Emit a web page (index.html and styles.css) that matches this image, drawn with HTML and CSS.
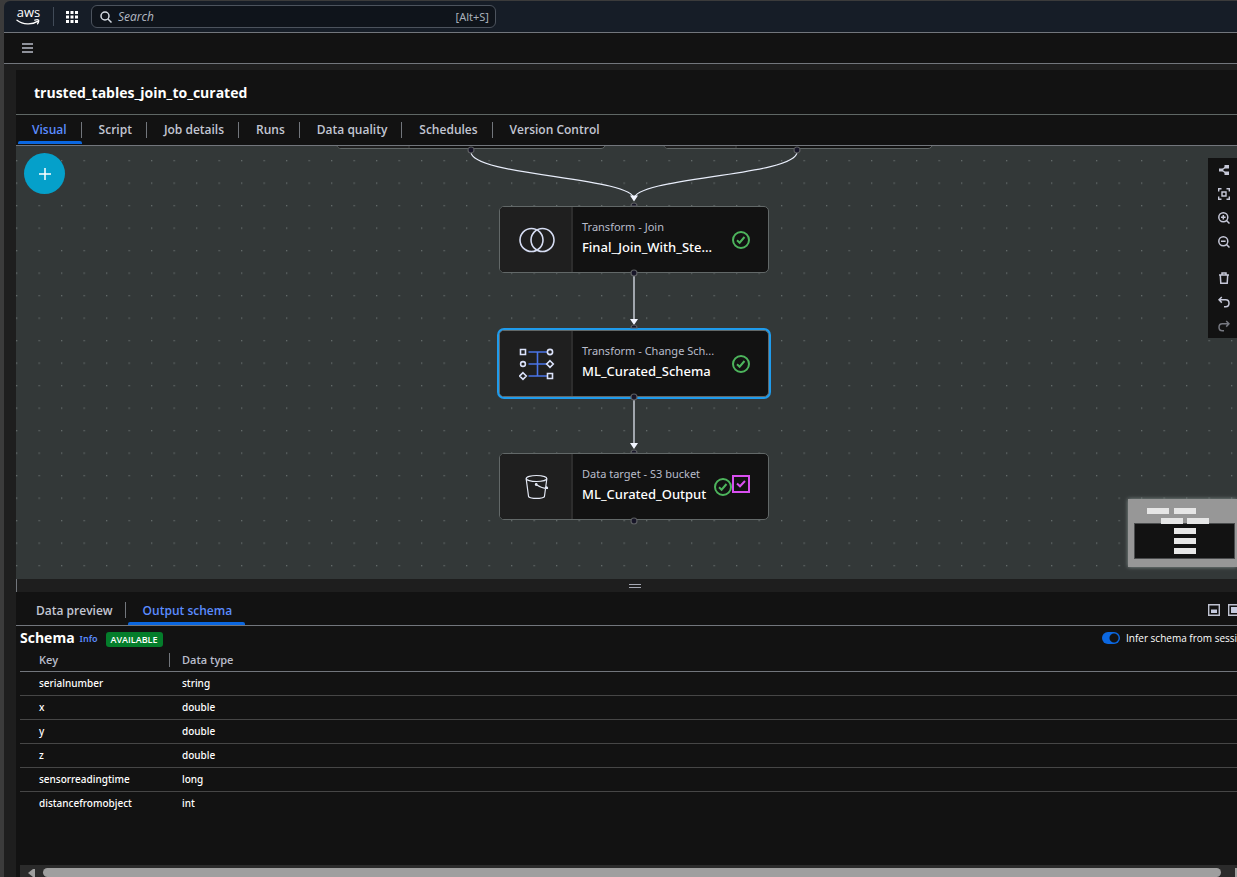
FILE: index.html
```html
<!DOCTYPE html>
<html lang="en">
<head>
<meta charset="utf-8">
<title>trusted_tables_join_to_curated</title>
<link rel="stylesheet" href="styles.css">
</head>
<body>
<div class="app">
  <header class="topnav">
    <a class="logo" href="#" aria-label="aws">
      <span class="logo-text">aws</span>
      <svg class="logo-smile" width="24" height="7" viewBox="0 0 24 7"><path d="M1 1.2C7 5.8 16 6 21.5 2.4M18.8 1.2c1.5-.5 3.3-.5 3.8 0 .3.8-.3 2.5-1.1 3.6" fill="none" stroke="#fff" stroke-width="1.3" stroke-linecap="round"/></svg>
    </a>
    <span class="nav-rule"></span>
    <button class="icon-btn apps" aria-label="Services">
      <svg width="12" height="12" viewBox="0 0 12 12" fill="#fff"><path d="M0 0h3v3H0zM4.500 0h3v3h-3zM9 0h3v3H9zM0 4.500h3v3H0zM4.500 4.500h3v3h-3zM9 4.500h3v3H9zM0 9h3v3H0zM4.500 9h3v3h-3zM9 9h3v3H9z"/></svg>
    </button>
    <div class="search">
      <svg width="12" height="12" viewBox="0 0 12 12" fill="none" stroke="#d5dbe3" stroke-width="1.5"><circle cx="5" cy="5" r="4"/><path d="M8 8l3.5 3.5"/></svg>
      <input type="text" placeholder="Search" aria-label="Search">
      <span class="shortcut">[Alt+S]</span>
    </div>
  </header>
  <div class="subnav">
    <button class="icon-btn" aria-label="Open menu">
      <svg width="11" height="10" viewBox="0 0 11 10" stroke="#b8bcc8" stroke-width="1.6"><path d="M0 1h11M0 5h11M0 9h11"/></svg>
    </button>
  </div>
  <main class="workspace">
    <h1 class="title">trusted_tables_join_to_curated</h1>
    <nav class="tabs">
      <button class="tab active">Visual</button>
      <button class="tab">Script</button>
      <button class="tab">Job details</button>
      <button class="tab">Runs</button>
      <button class="tab">Data quality</button>
      <button class="tab">Schedules</button>
      <button class="tab">Version Control</button>
    </nav>
    <section class="canvas">
      <svg class="grid" width="100%" height="100%">
        <defs><pattern id="dots" width="22.5" height="22.5" y="3.2" patternUnits="userSpaceOnUse"><rect x="0" y="11" width="1.3" height="1" fill="#747b7a"/></pattern></defs>
        <rect width="100%" height="100%" fill="url(#dots)"/>
      </svg>
      <div class="node parent-left"><span class="node-icon"></span></div>
      <div class="node parent-right"><span class="node-icon"></span></div>
      <article class="node join">
        <span class="node-icon">
          <svg width="36" height="26" viewBox="0 0 36 26" fill="none" stroke="#d5dcf2" stroke-width="1.6"><circle cx="12.500" cy="13" r="11.500"/><circle cx="23.500" cy="13" r="11.500"/></svg>
        </span>
        <span class="node-text"><span class="kind">Transform - Join</span><span class="name">Final_Join_With_Ste...</span></span>
        <svg class="ok" width="18" height="18" viewBox="0 0 18 18" fill="none" stroke="#4db45c" stroke-width="2"><circle cx="9" cy="9" r="8"/><path d="M5 9.300l2.600 2.400L12.500 6"/></svg>
      </article>
      <article class="node schema selected">
        <span class="node-icon">
          <svg width="36" height="34" viewBox="0 0 36 34" fill="none" stroke-width="1.600"><path d="M9.500 5H28M9.500 17H28M9.500 29H28M18.500 5v24" stroke="#4a74e8"/><g stroke="#dbe2fa"><path d="M1.500 2.500h5v5h-5zM28.500 26.500h5v5h-5zM4 25.700L7.300 29 4 32.300.7 29zM31 13.700l3.300 3.300-3.300 3.300-3.300-3.300z"/><circle cx="4" cy="17" r="2.400"/><circle cx="31" cy="5" r="2.600"/></g></svg>
        </span>
        <span class="node-text"><span class="kind">Transform - Change Sch...</span><span class="name">ML_Curated_Schema</span></span>
        <svg class="ok" width="18" height="18" viewBox="0 0 18 18" fill="none" stroke="#4db45c" stroke-width="2"><circle cx="9" cy="9" r="8"/><path d="M5 9.300l2.600 2.400L12.500 6"/></svg>
      </article>
      <article class="node target">
        <span class="node-icon">
          <svg width="24" height="26" viewBox="0 0 24 26" fill="none" stroke="#e4e9f5" stroke-width="1.200" stroke-linecap="round"><ellipse cx="11.500" cy="4.500" rx="10.300" ry="3"/><path d="M1.200 5l2.400 17.800c2.500 2.200 13.300 2.200 15.800 0L21.800 5M11.500 10.800c3.500 2.200 8 4 11 3.600.3-.9-.7-1.500-1.800-1.800"/><circle cx="11.200" cy="10.500" r=".8"/></svg>
        </span>
        <span class="node-text"><span class="kind">Data target - S3 bucket</span><span class="name">ML_Curated_Output</span></span>
        <svg class="ok" width="18" height="18" viewBox="0 0 18 18" fill="none" stroke="#4db45c" stroke-width="2"><circle cx="9" cy="9" r="8"/><path d="M5 9.300l2.600 2.400L12.500 6"/></svg>
        <svg class="preview" width="18" height="18" viewBox="0 0 18 18" fill="none" stroke="#d94ff0" stroke-width="2"><path d="M1 1h16v16H1zM5 8.500l3 2.800L13 6"/></svg>
      </article>
      <svg class="edges" width="640" height="433" viewBox="0 0 640 433" fill="none">
        <g stroke="#e9eefb" stroke-width="1.200">
          <path d="M135 6C135 30 298 31 298 53"/>
          <path d="M461 6C461 30 298 31 298 53"/>
          <path d="M298 129v48M298 253v48"/>
        </g>
        <path d="M294 49.500h8l-4 6zM294 173h8l-4 6zM294 297h8l-4 6z" fill="#f2f5ff"/>
        <g fill="#171528" stroke="#5b5d60" stroke-width="1.200">
          <circle cx="135" cy="4" r="3"/><circle cx="461" cy="4" r="3"/>
          <path d="M295 60a3 3 0 0 1 6 0zM295 182a3 3 0 0 1 6 0zM295 307a3 3 0 0 1 6 0z"/>
          <circle cx="298" cy="127" r="3"/><circle cx="298" cy="251" r="3"/><circle cx="298" cy="375" r="3"/>
        </g>
      </svg>
      <button class="add" aria-label="Add node"><svg width="12" height="12" viewBox="0 0 12 12" stroke="#fff" stroke-width="1.500"><path d="M6 0v12M0 6h12"/></svg></button>
      <div class="tools">
        <button class="icon-btn" aria-label="Arrange"><svg width="12" height="12" viewBox="0 0 12 12" fill="#c6c8d8"><path d="M6.500 1H11v3.500H6.500zM6.500 7.500H11V11H6.500zM1 4.500h4v3H1z"/><path d="M4 6l3.500-3M4 6l3.500 3" stroke="#c6c8d8" stroke-width="1.200"/></svg></button>
        <button class="icon-btn" aria-label="Fit to screen"><svg width="12" height="12" viewBox="0 0 12 12" fill="none" stroke="#c6c8d8" stroke-width="1.400"><path d="M.7 3.500V.7h2.800M8.500.7h2.800v2.800M11.300 8.500v2.800H8.500M3.500 11.300H.7V8.500M4 4h4v4H4z"/></svg></button>
        <button class="icon-btn" aria-label="Zoom in"><svg width="12" height="12" viewBox="0 0 12 12" fill="none" stroke="#c6c8d8" stroke-width="1.500"><circle cx="5.300" cy="5.300" r="4.500"/><path d="M8.500 8.500l3 3M3 5.300h4.600M5.300 3v4.600"/></svg></button>
        <button class="icon-btn" aria-label="Zoom out"><svg width="12" height="12" viewBox="0 0 12 12" fill="none" stroke="#c6c8d8" stroke-width="1.500"><circle cx="5.300" cy="5.300" r="4.500"/><path d="M8.500 8.500l3 3M3 5.300h4.600"/></svg></button>
        <button class="icon-btn remove" aria-label="Delete"><svg width="12" height="12" viewBox="0 0 12 12" fill="none" stroke="#c6c8d8" stroke-width="1.500"><path d="M1 3h10M4 3V1h4v2M2.300 3l.5 8.200h6.400L9.700 3"/></svg></button>
        <button class="icon-btn" aria-label="Undo"><svg width="12" height="12" viewBox="0 0 12 12" fill="none" stroke="#c6c8d8" stroke-width="1.500"><path d="M3.800 1L1 3.800l2.800 2.800M1 3.800h6.700c4.400 0 4.400 7 0 7H6"/></svg></button>
        <button class="icon-btn" aria-label="Redo" disabled><svg width="12" height="12" viewBox="0 0 12 12" fill="none" stroke="#777981" stroke-width="1.500"><path d="M8.200 1L11 3.800 8.200 6.600M11 3.800H4.300c-4.400 0-4.400 7 0 7H6"/></svg></button>
      </div>
      <svg class="minimap" width="109" height="68" viewBox="0 0 109 68">
        <rect width="109" height="68" fill="#979797"/>
        <rect x="6.500" y="24.500" width="100" height="35" fill="#121212" stroke="#4a4c4d"/>
        <path fill="#e6e6e6" d="M19 9h22v6H19zM46 9h22v6H46zM33 19h22v6H33zM59 19h22v6H59zM46 29h22v6H46zM46 39h22v6H46zM46 49h22v6H46z"/>
      </svg>
    </section>
    <div class="splitter"><svg width="12" height="4" viewBox="0 0 12 4" stroke="#a5a8b3"><path d="M0 .5h12M0 3.500h12"/></svg></div>
    <section class="drawer">
      <nav class="tabs drawer-tabs">
        <button class="tab">Data preview</button>
        <button class="tab active">Output schema</button>
        <span class="layout-btns">
          <button class="icon-btn" aria-label="Small panel"><svg width="12" height="12" viewBox="0 0 12 12"><path d="M.7.700h10.600v10.600H.7z" fill="none" stroke="#bfc2d1" stroke-width="1.400"/><path d="M3 5.500h6V9H3z" fill="#c6cbe0"/></svg></button>
          <button class="icon-btn" aria-label="Full panel"><svg width="12" height="12" viewBox="0 0 12 12"><path d="M.7.700h10.600v10.600H.7z" fill="none" stroke="#bfc2d1" stroke-width="1.400"/><path d="M3 3h6v6H3z" fill="#c6cbe0"/></svg></button>
        </span>
      </nav>
      <div class="schema-head">
        <h2>Schema</h2>
        <a href="#">Info</a>
        <span class="badge">AVAILABLE</span>
        <label class="infer"><input type="checkbox" checked><span>Infer schema from sessi</span></label>
      </div>
      <table class="fields">
        <thead><tr><th scope="col"><span>Key</span></th><th scope="col">Data type</th></tr></thead>
        <tbody>
          <tr><td>serialnumber</td><td>string</td></tr>
          <tr><td>x</td><td>double</td></tr>
          <tr><td>y</td><td>double</td></tr>
          <tr><td>z</td><td>double</td></tr>
          <tr><td>sensorreadingtime</td><td>long</td></tr>
          <tr><td>distancefromobject</td><td>int</td></tr>
        </tbody>
      </table>
      <div class="scrollbar">
        <svg width="7" height="10" viewBox="0 0 7 10"><path d="M7 1v8H5L0 5l5-4z" fill="#9f9f9f"/></svg>
        <span class="thumb"></span>
        <span class="next"></span>
      </div>
    </section>
  </main>
</div>
</body>
</html>
```
FILE: styles.css
```css
* { box-sizing: border-box; }
body {
  margin: 0;
  height: 100vh;
  overflow: hidden;
  background: #3b3b3b;
  color: #fff;
  font: 12px/16px "Noto Sans", "Open Sans", sans-serif;
}
button, input { font: inherit; color: inherit; }
button { background: none; border: 0; padding: 0; }
svg { display: block; }
.app {
  height: 100%;
  padding: 1px 0 0 4px;
  display: flex;
  flex-direction: column;
}
.icon-btn { display: flex; flex: none; }

.topnav {
  display: flex;
  align-items: center;
  height: 32px;
  flex: none;
  padding-left: 12px;
  background: #161d27;
  border-bottom: 1px solid #72767c;
  border-top-left-radius: 6px;
}
.logo { width: 25px; color: #fff; text-decoration: none; }
.logo-text { display: block; text-align: center; font: 500 13px/11px "Open Sans", sans-serif; }
.logo-smile { margin-top: 1px; }
.nav-rule { width: 1px; height: 19px; margin: 0 12px; background: #414b58; }
.search {
  display: flex;
  align-items: center;
  gap: 6px;
  width: 405px;
  height: 23px;
  margin-left: 13px;
  padding: 0 6px 0 8px;
  background: #0f141b;
  border: 1px solid #4c535d;
  border-radius: 6px;
}
.search input {
  flex: 1;
  min-width: 0;
  padding: 0;
  border: 0;
  background: none;
  outline: 0;
}
.search input::placeholder { color: #b3b9c2; font-family: "Open Sans", sans-serif; font-style: italic; opacity: 1; }
.shortcut { color: #a9b0ba; font-size: 11px; }

.subnav {
  display: flex;
  align-items: center;
  height: 31px;
  flex: none;
  padding-left: 18px;
  background: #121212;
  border-bottom: 1px solid #72767c;
}

.workspace {
  flex: 1;
  min-height: 0;
  display: grid;
  grid-template-columns: minmax(0, 1fr);
  grid-template-rows: auto auto minmax(0, 433fr) 13px minmax(0, 285fr);
  padding: 6px 0 0 12px;
  background: #1e1e1e;
}
.title {
  margin: 0;
  padding: 13px 18px 11px;
  font: 700 14px/20px "Open Sans", sans-serif;
  background: #121212;
  border-bottom: 1px solid #5f6765;
}
.tabs {
  display: flex;
  align-items: stretch;
  height: 31px;
  padding-left: 2px;
  background: #121212;
  border-bottom: 1px solid #72767c;
  font-family: "Open Sans", sans-serif;
}
.tab {
  position: relative;
  padding: 0 15px 0 14px;
  color: #c2c6d2;
  font-weight: 600;
  white-space: nowrap;
}
.tab + .tab { padding-left: 17px; }
.tab:not(:last-of-type)::after {
  content: "";
  position: absolute;
  right: 0;
  top: 7px;
  height: 16px;
  border-right: 1px solid #72767c;
}
.tab.active { color: #5b8cff; }
.tab.active::before {
  content: "";
  position: absolute;
  left: 0;
  right: 0;
  bottom: 1px;
  height: 3px;
  background: #0b67e0;
  border-radius: 2px 2px 0 0;
}

.canvas { position: relative; overflow: hidden; background: #333838; }
.grid { position: absolute; inset: 0; }
.node {
  position: absolute;
  left: 483px;
  width: 270px;
  height: 67px;
  display: flex;
  align-items: center;
  padding-right: 18px;
  background: #121212;
  border: 1px solid #626868;
  border-radius: 5px;
  overflow: hidden;
}
.parent-left { left: 320px; top: -64px; }
.parent-right { left: 647px; top: -64px; }
.join { top: 60px; }
.schema { top: 184px; }
.target { top: 307px; }
.selected { box-shadow: 0 0 0 2px #1f9bec; }
.node-icon {
  width: 73px;
  height: 100%;
  flex: none;
  display: flex;
  align-items: center;
  justify-content: center;
  padding-left: 2px;
  background: #1f1f1f;
  border-right: 2px solid #2d2d2d;
}
.node-text { flex: 1; padding: 0 0 3px 9px; white-space: nowrap; min-width: 0; }
.kind { display: block; font-size: 11px; line-height: 18px; color: #b9bdcb; }
.name { display: block; font-size: 13px; line-height: 22px; font-weight: 500; }
.ok { flex: none; }
.preview { flex: none; margin-bottom: 6px; }
.edges { position: absolute; left: 320px; top: 0; }
.add {
  position: absolute;
  left: 8px;
  top: 7px;
  width: 41px;
  height: 41px;
  display: grid;
  place-items: center;
  border-radius: 50%;
  background: #05a0ca;
}
.tools {
  position: absolute;
  right: 0;
  top: 12px;
  width: 29px;
  display: flex;
  flex-direction: column;
  gap: 12px;
  padding: 6px 0 6px 10px;
  background: #121212;
}
.remove { margin-top: 12px; }
.minimap {
  position: absolute;
  right: 0;
  bottom: 12px;
  box-shadow: 0 0 4px #8a9594;
}

.splitter {
  display: grid;
  place-items: center;
  padding-left: 15px;
  border-left: 1px solid #72767c;
}
.drawer {
  display: flex;
  flex-direction: column;
  min-height: 0;
  background: #121212;
  font-size: 10px;
}
.drawer-tabs { height: 34px; flex: none; padding: 3px 0 0 4px; font-size: 12px; }
.drawer-tabs .tab { padding: 2px 13px 0 16px; }
.drawer-tabs .tab + .tab { margin-left: 2px; padding-left: 15px; }
.drawer-tabs .tab.active::before { bottom: 0; }
.layout-btns { display: flex; gap: 8px; margin-left: auto; width: 29px; overflow: hidden; align-items: center; }

.schema-head {
  display: flex;
  align-items: center;
  height: 23px;
  flex: none;
  padding-left: 4px;
}
h2 { margin: 0; font: 700 14px/20px "Open Sans", sans-serif; }
.schema-head a { margin: 3px 8px 0 5px; font-size: 9px; font-weight: 600; color: #5b8cff; text-decoration: none; }
.badge {
  margin-top: 3px;
  padding: 0 5px;
  font: 600 9px/15px "Open Sans", sans-serif;
  background: #047d2b;
  border-radius: 3px;
}
.infer {
  display: flex;
  align-items: center;
  gap: 6px;
  width: 135px;
  margin-left: auto;
  font-family: "Open Sans", sans-serif;
  white-space: nowrap;
}
.infer input {
  appearance: none;
  flex: none;
  margin: 0;
  width: 18px;
  height: 12px;
  border-radius: 6px;
  background: radial-gradient(circle at 12px 6px, #121212 4px, #0b67e0 5px);
}

.fields { width: calc(100% - 4px); margin-left: 4px; border-collapse: collapse; table-layout: fixed; }
.fields th, .fields td {
  height: 24px;
  padding: 0 0 0 12px;
  text-align: left;
  font-weight: 500;
  line-height: 16px;
  border-bottom: 1px solid #464646;
}
.fields th { height: 22px; color: #b9bdcb; font: 600 11px/16px "Open Sans", sans-serif; border-bottom-color: #72767c; }
.fields th:first-child { width: 150px; }
.fields th span { display: block; border-right: 1px solid #72767c; line-height: 14px; }
.fields th:first-child, .fields td:first-child { padding-left: 19px; }
.fields tbody tr:last-child td { border-bottom: 0; }

.scrollbar {
  display: flex;
  align-items: center;
  height: 12px;
  flex: none;
  margin: auto 0 0 4px;
  padding: 3px 0 0 8px;
  background: #2b2b2b;
  overflow: hidden;
}
.thumb { flex: 1; height: 9px; margin: 0 14px 0 8px; border-radius: 5px; background: #9f9f9f; }
.next { width: 2px; height: 9px; background: #9f9f9f; }
```
